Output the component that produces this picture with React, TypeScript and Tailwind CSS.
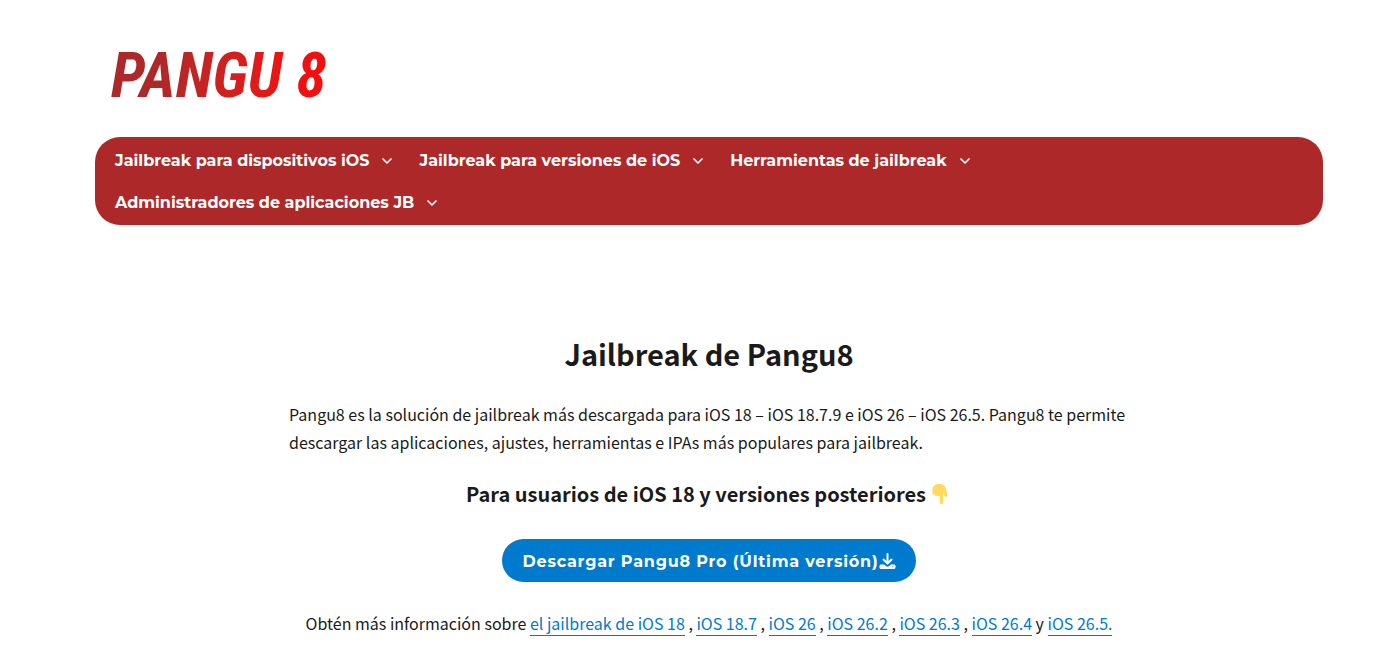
import { ChevronDown } from 'lucide-react';
import { Fragment } from 'react';

const menuItems = [
  'Jailbreak para dispositivos iOS',
  'Jailbreak para versiones de iOS',
  'Herramientas de jailbreak',
  'Administradores de aplicaciones JB',
];

const guides = [
  { label: 'el jailbreak de iOS 18', href: '#ios-18', after: ' , ' },
  { label: 'iOS 18.7', href: '#ios-18-7', after: ' , ' },
  { label: 'iOS 26', href: '#ios-26', after: ' , ' },
  { label: 'iOS 26.2', href: '#ios-26-2', after: ' , ' },
  { label: 'iOS 26.3', href: '#ios-26-3', after: ' , ' },
  { label: 'iOS 26.4', href: '#ios-26-4', after: ' y ' },
  { label: 'iOS 26.5.', href: '#ios-26-5', after: '' },
];

function PointDown() {
  return (
    <svg viewBox="0 0 16 22" className="mr-1 ml-[6px] inline-block h-[22px] w-4 align-[-3px]" aria-hidden="true">
      <path
        fill="#ffd95e"
        d="M8 1c3.500 0 5.600 2.200 6.100 5.500l1.300 5.700c.3 1.900-1.900 2.500-2.700.9l-1.300-2.700-.3.300v8.800c0 2.200-3.300 2.200-3.300 0v-7c-.8.800-2 .8-2.700 0-.9.600-2.200.300-2.600-.7C1.200 11.600.4 10.700.4 9.500V6.500C.7 3 3.500 1 8 1z"
      />
    </svg>
  );
}

function DownloadIcon() {
  return (
    <svg viewBox="0 0 17 17" className="h-[17px] w-[17px]" aria-hidden="true">
      <path d="M8.500 1v9M4.500 6.500l4 4 4-4" fill="none" stroke="white" strokeWidth="2" strokeLinecap="round" strokeLinejoin="round" />
      <path
        fill="white"
        fillRule="evenodd"
        d="M2 11.500h3.200l1.700 1.600c.9.900 2.300.9 3.200 0l1.700-1.600H15c.9 0 1.500.6 1.500 1.500v1.500c0 .9-.6 1.500-1.500 1.500H2c-.9 0-1.500-.6-1.500-1.500V13c0-.9.600-1.500 1.500-1.500zm11.700 1.800a.5.500 0 1 0 0 1 .5.500 0 0 0 0-1z"
      />
    </svg>
  );
}

function Header() {
  return (
    <header>
      <a
        href="#inicio"
        className="ml-4 inline-block bg-linear-to-r from-[#ad2828] from-20% to-[#f01010] to-80% bg-clip-text pr-1 font-['Roboto_Condensed','Liberation_Sans',sans-serif] text-[62px] leading-[62px] font-bold text-transparent italic"
      >
        PANGU 8
      </a>

      <nav
        aria-label="Principal"
        className="mt-[30px] flex flex-wrap gap-x-6 rounded-[25px] bg-[#ad2828] px-5 pt-[3px] pb-px font-[Montserrat,Inter,sans-serif] text-[16px] font-bold text-white"
      >
        {menuItems.map((item) => (
          <button key={item} type="button" className="flex h-[42px] cursor-pointer items-center gap-[10px]">
            {item}
            <ChevronDown size={16} strokeWidth={2.5} />
          </button>
        ))}
      </nav>
    </header>
  );
}

export default function App() {
  return (
    <div className="min-h-screen bg-white pt-[45px] pr-[66px] pl-[95px] font-['Noto_Sans_CJK_SC',sans-serif] text-[#1a1a1a]">
      <Header />

      <main className="mx-auto max-w-[840px] pt-[108px] text-[16px] leading-7">
        <h1 className="text-center text-[29px] leading-10 font-bold">Jailbreak de Pangu8</h1>
        <p className="mt-[27px]">
          Pangu8 es la solución de jailbreak más descargada para iOS 18 – iOS 18.7.9 e iOS 26 – iOS 26.5. Pangu8 te permite
          descargar las aplicaciones, ajustes, herramientas e IPAs más populares para jailbreak.
        </p>
        <h2 className="mt-6 text-center text-[20px] leading-7 font-bold">
          Para usuarios de iOS 18 y versiones posteriores
          <PointDown />
        </h2>
        <div className="mt-[31px] flex justify-center">
          <a
            href="#descargar"
            className="flex h-[43px] items-center rounded-full bg-[#007acc] px-5 pt-0.5 font-[Montserrat,Inter,sans-serif] text-[16px] font-bold tracking-wider text-white"
          >
            Descargar Pangu8 Pro (Última versión)
            <DownloadIcon />
          </a>
        </div>
        <p className="mt-[27px] text-center">
          Obtén más información sobre{' '}
          {guides.map((guide) => (
            <Fragment key={guide.href}>
              <a href={guide.href} className="border-b border-[#007acc] text-[#007acc]">
                {guide.label}
              </a>
              {guide.after}
            </Fragment>
          ))}
        </p>
      </main>
    </div>
  );
}
